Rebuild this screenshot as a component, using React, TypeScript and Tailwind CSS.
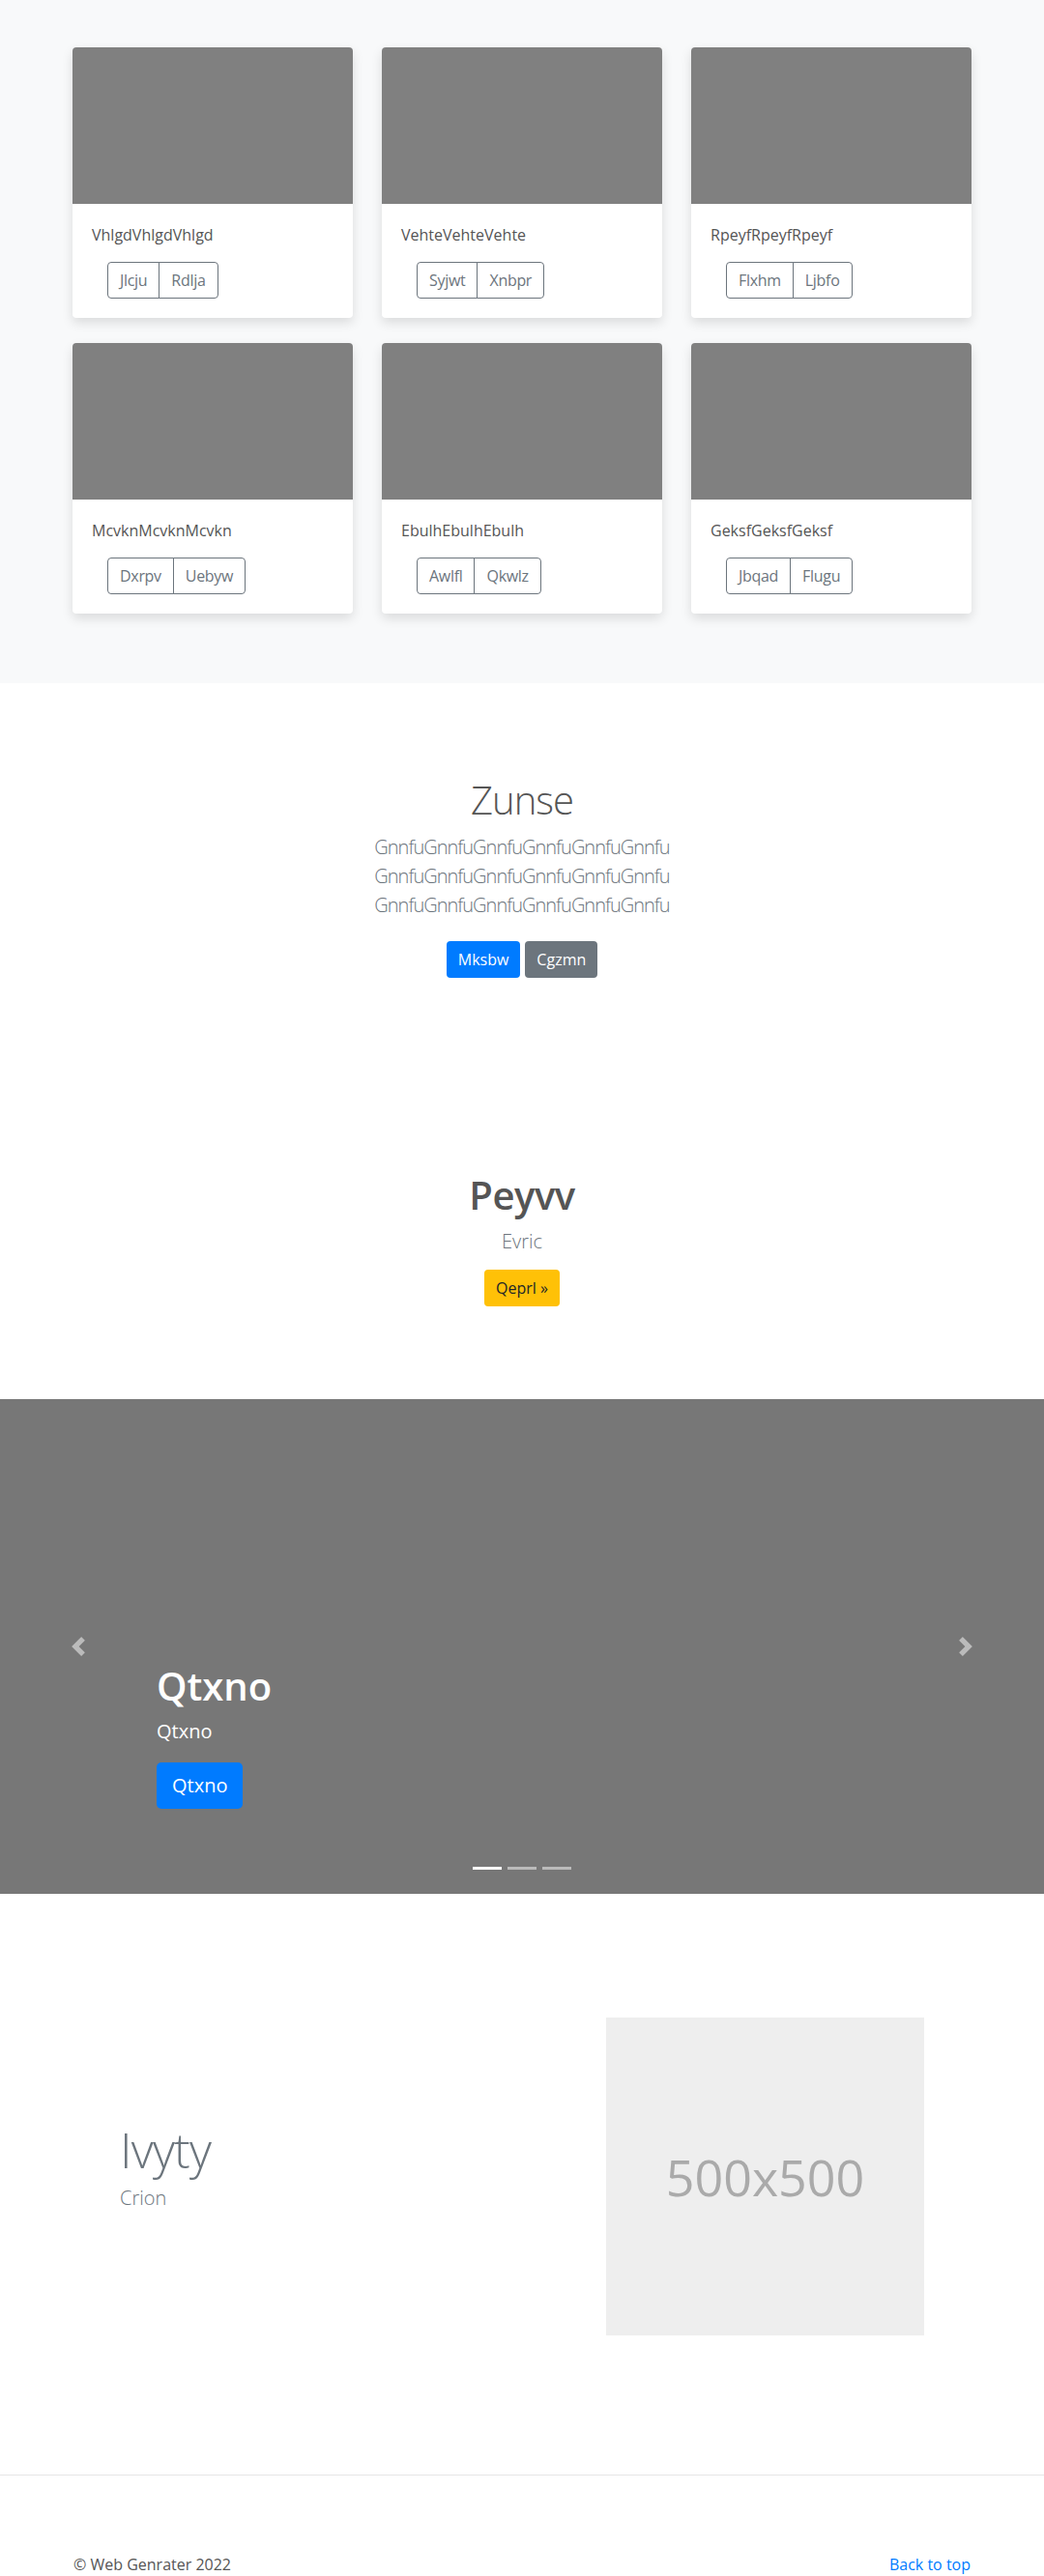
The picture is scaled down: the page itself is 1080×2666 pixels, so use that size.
import React from 'react';

const cards = [
  { title: 'VhlgdVhlgdVhlgd', a: 'Jlcju', b: 'Rdlja' },
  { title: 'VehteVehteVehte', a: 'Syjwt', b: 'Xnbpr' },
  { title: 'RpeyfRpeyfRpeyf', a: 'Flxhm', b: 'Ljbfo' },
  { title: 'McvknMcvknMcvkn', a: 'Dxrpv', b: 'Uebyw' },
  { title: 'EbulhEbulhEbulh', a: 'Awlfl', b: 'Qkwlz' },
  { title: 'GeksfGeksfGeksf', a: 'Jbqad', b: 'Flugu' },
];

const Chevron = ({ dir }: { dir: 'prev' | 'next' }) => (
  <svg width="20" height="20" viewBox="0 0 8 8" fill="#fff" className="opacity-50">
    {dir === 'prev' ? (
      <path d="M5.25 0l-4 4 4 4 1.5-1.5L4.25 4l2.5-2.5L5.25 0z" />
    ) : (
      <path d="M2.75 0l-1.5 1.5L3.75 4l-2.5 2.5L2.75 8l4-4-4-4z" />
    )}
  </svg>
);

export default function App() {
  return (
    <div className="font-['Open_Sans',sans-serif] text-[#212529] bg-white">
      {/* album */}
      <section className="bg-[#f8f9fa] pt-[49px] pb-[72px]">
        <div className="w-[930px] mx-auto grid grid-cols-3 gap-x-[30px] gap-y-[26px]">
          {cards.map((c, i) => (
            <div key={i} className="bg-white rounded shadow-[0_5px_12px_rgba(0,0,0,0.12)]">
              <div className="h-[162px] bg-[#808080] rounded-t" />
              <div className="p-5">
                <p className="text-base leading-6 text-[#555] mb-4">{c.title}</p>
                <div className="flex ml-4">
                  <button className="h-[38px] px-3 text-base leading-6 tracking-[-0.3px] text-[#6c757d] border border-[#6c757d] rounded-l">
                    {c.a}
                  </button>
                  <button className="h-[38px] px-3 -ml-px text-base leading-6 tracking-[-0.3px] text-[#6c757d] border border-[#6c757d] rounded-r">
                    {c.b}
                  </button>
                </div>
              </div>
            </div>
          ))}
        </div>
      </section>

      {/* jumbotron */}
      <section className="pt-[97px] text-center">
        <h1 className="text-[40px] leading-[48px] font-light tracking-[-1px] text-[#555] mb-[10px]">Zunse</h1>
        <p className="w-[450px] mx-auto text-xl leading-[30px] font-light tracking-[-1px] text-[#6c757d]">
          GnnfuGnnfuGnnfuGnnfuGnnfuGnnfu GnnfuGnnfuGnnfuGnnfuGnnfuGnnfu GnnfuGnnfuGnnfuGnnfuGnnfuGnnfu
        </p>
        <div className="mt-[22px] flex justify-center gap-[5px]">
          <button className="h-[38px] px-3 text-base leading-6 text-white bg-[#007bff] rounded">Mksbw</button>
          <button className="h-[38px] px-3 text-base leading-6 text-white bg-[#6c757d] rounded">Cgzmn</button>
        </div>
      </section>

      {/* heading */}
      <section className="pt-[201px] text-center">
        <h1 className="text-[40px] leading-[48px] font-semibold tracking-[-0.5px] text-[#555] mb-[9px]">Peyvv</h1>
        <p className="text-xl leading-[30px] font-light text-[#6c757d]">Evric</p>
        <button className="mt-[14px] h-[38px] px-3 text-base leading-6 text-[#212529] bg-[#ffc107] rounded">
          Qeprl »
        </button>
      </section>

      {/* carousel */}
      <section className="mt-[96px] relative h-[512px] bg-[#777] flex items-end pl-[162px] pb-[88px]">
        <div className="text-white">
          <h1 className="text-[40px] leading-[48px] font-semibold mb-2">Qtxno</h1>
          <p className="text-xl leading-[30px] mb-[17px]">Qtxno</p>
          <button className="h-12 px-4 text-xl leading-[30px] text-white bg-[#007bff] rounded-[5px]">Qtxno</button>
        </div>
        <div className="absolute left-[71px] top-[246px]">
          <Chevron dir="prev" />
        </div>
        <div className="absolute right-[71px] top-[246px]">
          <Chevron dir="next" />
        </div>
        <div className="absolute bottom-[25px] left-0 right-0 flex justify-center gap-[6px]">
          <span className="w-[30px] h-[3px] bg-white" />
          <span className="w-[30px] h-[3px] bg-white/50" />
          <span className="w-[30px] h-[3px] bg-white/50" />
        </div>
      </section>

      {/* featurette */}
      <section className="mt-[128px] flex items-center pl-[124px]">
        <div className="w-[503px]">
          <h2 className="text-[50px] leading-none font-light tracking-[-0.05rem] text-[#6c757d] mb-[10px]">Ivyty</h2>
          <p className="text-xl leading-[30px] font-light text-[#6c757d] mb-4">Crion</p>
        </div>
        <div className="w-[329px] h-[329px] bg-[#eee] flex items-center justify-center">
          <span className="text-[52px] text-[#aaa]">500x500</span>
        </div>
      </section>

      <hr className="mt-[144px] border-0 border-t border-[#e5e5e5]" />

      {/* footer */}
      <footer className="pt-[80px] px-[76px] flex justify-between text-base leading-6">
        <p className="text-[#555]">© Web Genrater 2022</p>
        <a href="#" className="text-[#007bff]">Back to top</a>
      </footer>
    </div>
  );
}
